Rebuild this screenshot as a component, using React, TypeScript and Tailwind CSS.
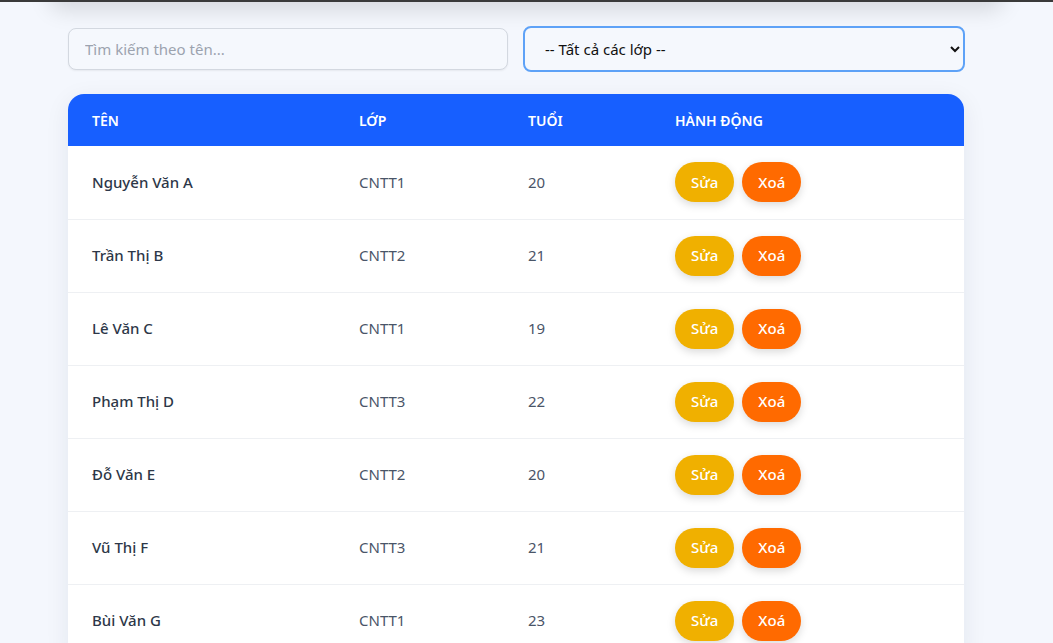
import { useState } from "react"

const students = [
  { name: "Nguyễn Văn A", cls: "CNTT1", age: 20 },
  { name: "Trần Thị B", cls: "CNTT2", age: 21 },
  { name: "Lê Văn C", cls: "CNTT1", age: 19 },
  { name: "Phạm Thị D", cls: "CNTT3", age: 22 },
  { name: "Đỗ Văn E", cls: "CNTT2", age: 20 },
  { name: "Vũ Thị F", cls: "CNTT3", age: 21 },
  { name: "Bùi Văn G", cls: "CNTT1", age: 23 },
]

export default function App() {
  const [query, setQuery] = useState("")
  const [cls, setCls] = useState("")

  return (
    <div className="min-h-screen overflow-hidden bg-[#f4f7fd] font-['Noto_Sans',sans-serif]">
      {/* top bar + shadow of the card above */}
      <div className="relative z-10 h-[2px] bg-[#3a3a3a]" />
      <div className="-mt-[42px] mx-[50px] h-[42px] rounded-b-xl bg-[#f4f7fd] shadow-[0_8px_22px_rgba(0,0,0,0.13)]" />

      <div className="ml-[68px] w-[897px] pt-6 pb-10">
        {/* Filters */}
        <div className="flex items-center gap-[15px] mb-[22px]">
          <input
            value={query}
            onChange={(e) => setQuery(e.target.value)}
            placeholder="Tìm kiếm theo tên..."
            className="shrink-0 w-[440px] h-[42px] rounded-lg border border-[#d3d8e0] bg-[#f5f8fd] px-4 text-[15px] text-gray-800 placeholder:text-[#9ca3af] shadow-[0_1px_2px_rgba(0,0,0,0.06)] outline-none"
          />
          <select
            value={cls}
            onChange={(e) => setCls(e.target.value)}
            className="shrink-0 w-[442px] h-[46px] rounded-lg border-2 border-[#5ea2f7] bg-[#f5f8fd] pl-4 pr-2 text-[15px] text-[#111] outline-none"
          >
            <option value="">-- Tất cả các lớp --</option>
            <option value="CNTT1">CNTT1</option>
            <option value="CNTT2">CNTT2</option>
            <option value="CNTT3">CNTT3</option>
          </select>
        </div>

        {/* Table */}
        <div className="w-[896px] rounded-2xl bg-white overflow-hidden shadow-[0_6px_24px_rgba(30,41,59,0.08)]">
          <table className="w-full border-collapse text-left">
            <thead>
              <tr className="bg-[#175fff] text-white">
                <th className="w-[267px] h-[52px] px-6 text-[14px] font-semibold">TÊN</th>
                <th className="w-[169px] px-6 text-[14px] font-semibold">LỚP</th>
                <th className="w-[147px] px-6 text-[14px] font-semibold">TUỔI</th>
                <th className="px-6 text-[14px] font-semibold">HÀNH ĐỘNG</th>
              </tr>
            </thead>
            <tbody>
              {students.map((s) => (
                <tr key={s.name} className="border-b border-[#eef0f3]">
                  <td className="h-[73px] px-6 text-[15px] font-medium text-[#2d3748]">{s.name}</td>
                  <td className="px-6 text-[15px] text-[#4a5568]">{s.cls}</td>
                  <td className="px-6 text-[15px] text-[#4a5568]">{s.age}</td>
                  <td className="px-6">
                    <div className="flex gap-2">
                      <button className="h-10 px-4 rounded-full bg-[#f0b000] text-[15px] font-medium text-white shadow-[0_3px_8px_rgba(0,0,0,0.15)]">
                        Sửa
                      </button>
                      <button className="h-10 px-4 rounded-full bg-[#ff6a00] text-[15px] font-medium text-white shadow-[0_3px_8px_rgba(0,0,0,0.15)]">
                        Xoá
                      </button>
                    </div>
                  </td>
                </tr>
              ))}
            </tbody>
          </table>
        </div>
      </div>
    </div>
  )
}
